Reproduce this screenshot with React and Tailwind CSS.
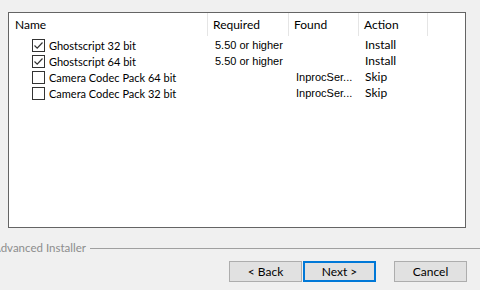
import React from 'react';

const rows = [
  { name: 'Ghostscript 32 bit', checked: true, required: '5.50 or higher', found: '', action: 'Install' },
  { name: 'Ghostscript 64 bit', checked: true, required: '5.50 or higher', found: '', action: 'Install' },
  { name: 'Camera Codec Pack 64 bit', checked: false, required: '', found: 'InprocSer...', action: 'Skip' },
  { name: 'Camera Codec Pack 32 bit', checked: false, required: '', found: 'InprocSer...', action: 'Skip' },
];

function Check({ checked }) {
  return (
    <div className="w-[13px] h-[13px] border border-[#333333] bg-white flex items-center justify-center shrink-0">
      {checked && (
        <svg width="11" height="11" viewBox="0 0 11 11">
          <path d="M1.5 5.5 L4.2 8.2 L9.5 2.5" fill="none" stroke="#333333" strokeWidth="1.2" />
        </svg>
      )}
    </div>
  );
}

function Button({ children, primary }) {
  return (
    <button
      type="button"
      className={
        'h-[21px] w-[73px] bg-[#e1e1e1] text-[12px] text-black leading-none ' +
        (primary ? 'border-2 border-[#0078d7]' : 'border border-[#adadad]')
      }
    >
      {children}
    </button>
  );
}

export default function App() {
  return (
    <div className="w-[480px] h-[290px] bg-[#f0f0f0] overflow-hidden text-[12px] text-black font-['Lato',sans-serif]">
      <div className="pt-[12px] pl-[8px]">
        <div className="w-[458px] h-[216px] bg-white border border-[#646464]">
          <div className="flex h-[23px] items-center leading-none">
            <div className="w-[199px] h-full pl-[6px] flex items-center border-r border-[#e5e5e5]">Name</div>
            <div className="w-[81px] h-full pl-[5px] flex items-center border-r border-[#e5e5e5]">Required</div>
            <div className="w-[70px] h-full pl-[5px] flex items-center border-r border-[#e5e5e5]">Found</div>
            <div className="w-[69px] h-full pl-[5px] flex items-center border-r border-[#e5e5e5]">Action</div>
          </div>
          <div className="pt-[1px]">
            {rows.map((r) => (
              <div key={r.name} className="flex h-4 items-center leading-none whitespace-nowrap">
                <div className="w-[199px] pl-[23px] flex items-center gap-[4px]">
                  <Check checked={r.checked} />
                  <span className="text-[11px]">{r.name}</span>
                </div>
                <div className="w-[81px] pl-[7px] text-[11px] font-['Liberation_Sans',sans-serif]">{r.required}</div>
                <div className="w-[70px] pl-[7px] text-[11px] font-['Liberation_Sans',sans-serif]">{r.found}</div>
                <div className="w-[69px] pl-[6px]">{r.action}</div>
              </div>
            ))}
          </div>
        </div>
      </div>
      <div className="flex items-center h-[14px] mt-[13px]">
        <span className="-ml-[7px] text-[11.5px] text-[#8d8d8d] leading-none whitespace-nowrap">Advanced Installer</span>
        <div className="flex-1 ml-[4px] h-px bg-[#a0a0a0]" />
      </div>
      <div className="flex mt-[6px] pl-[229px]">
        <Button>&lt; Back</Button>
        <div className="ml-[1px]">
          <Button primary>Next &gt;</Button>
        </div>
        <div className="ml-[18px]">
          <Button>Cancel</Button>
        </div>
      </div>
    </div>
  );
}
